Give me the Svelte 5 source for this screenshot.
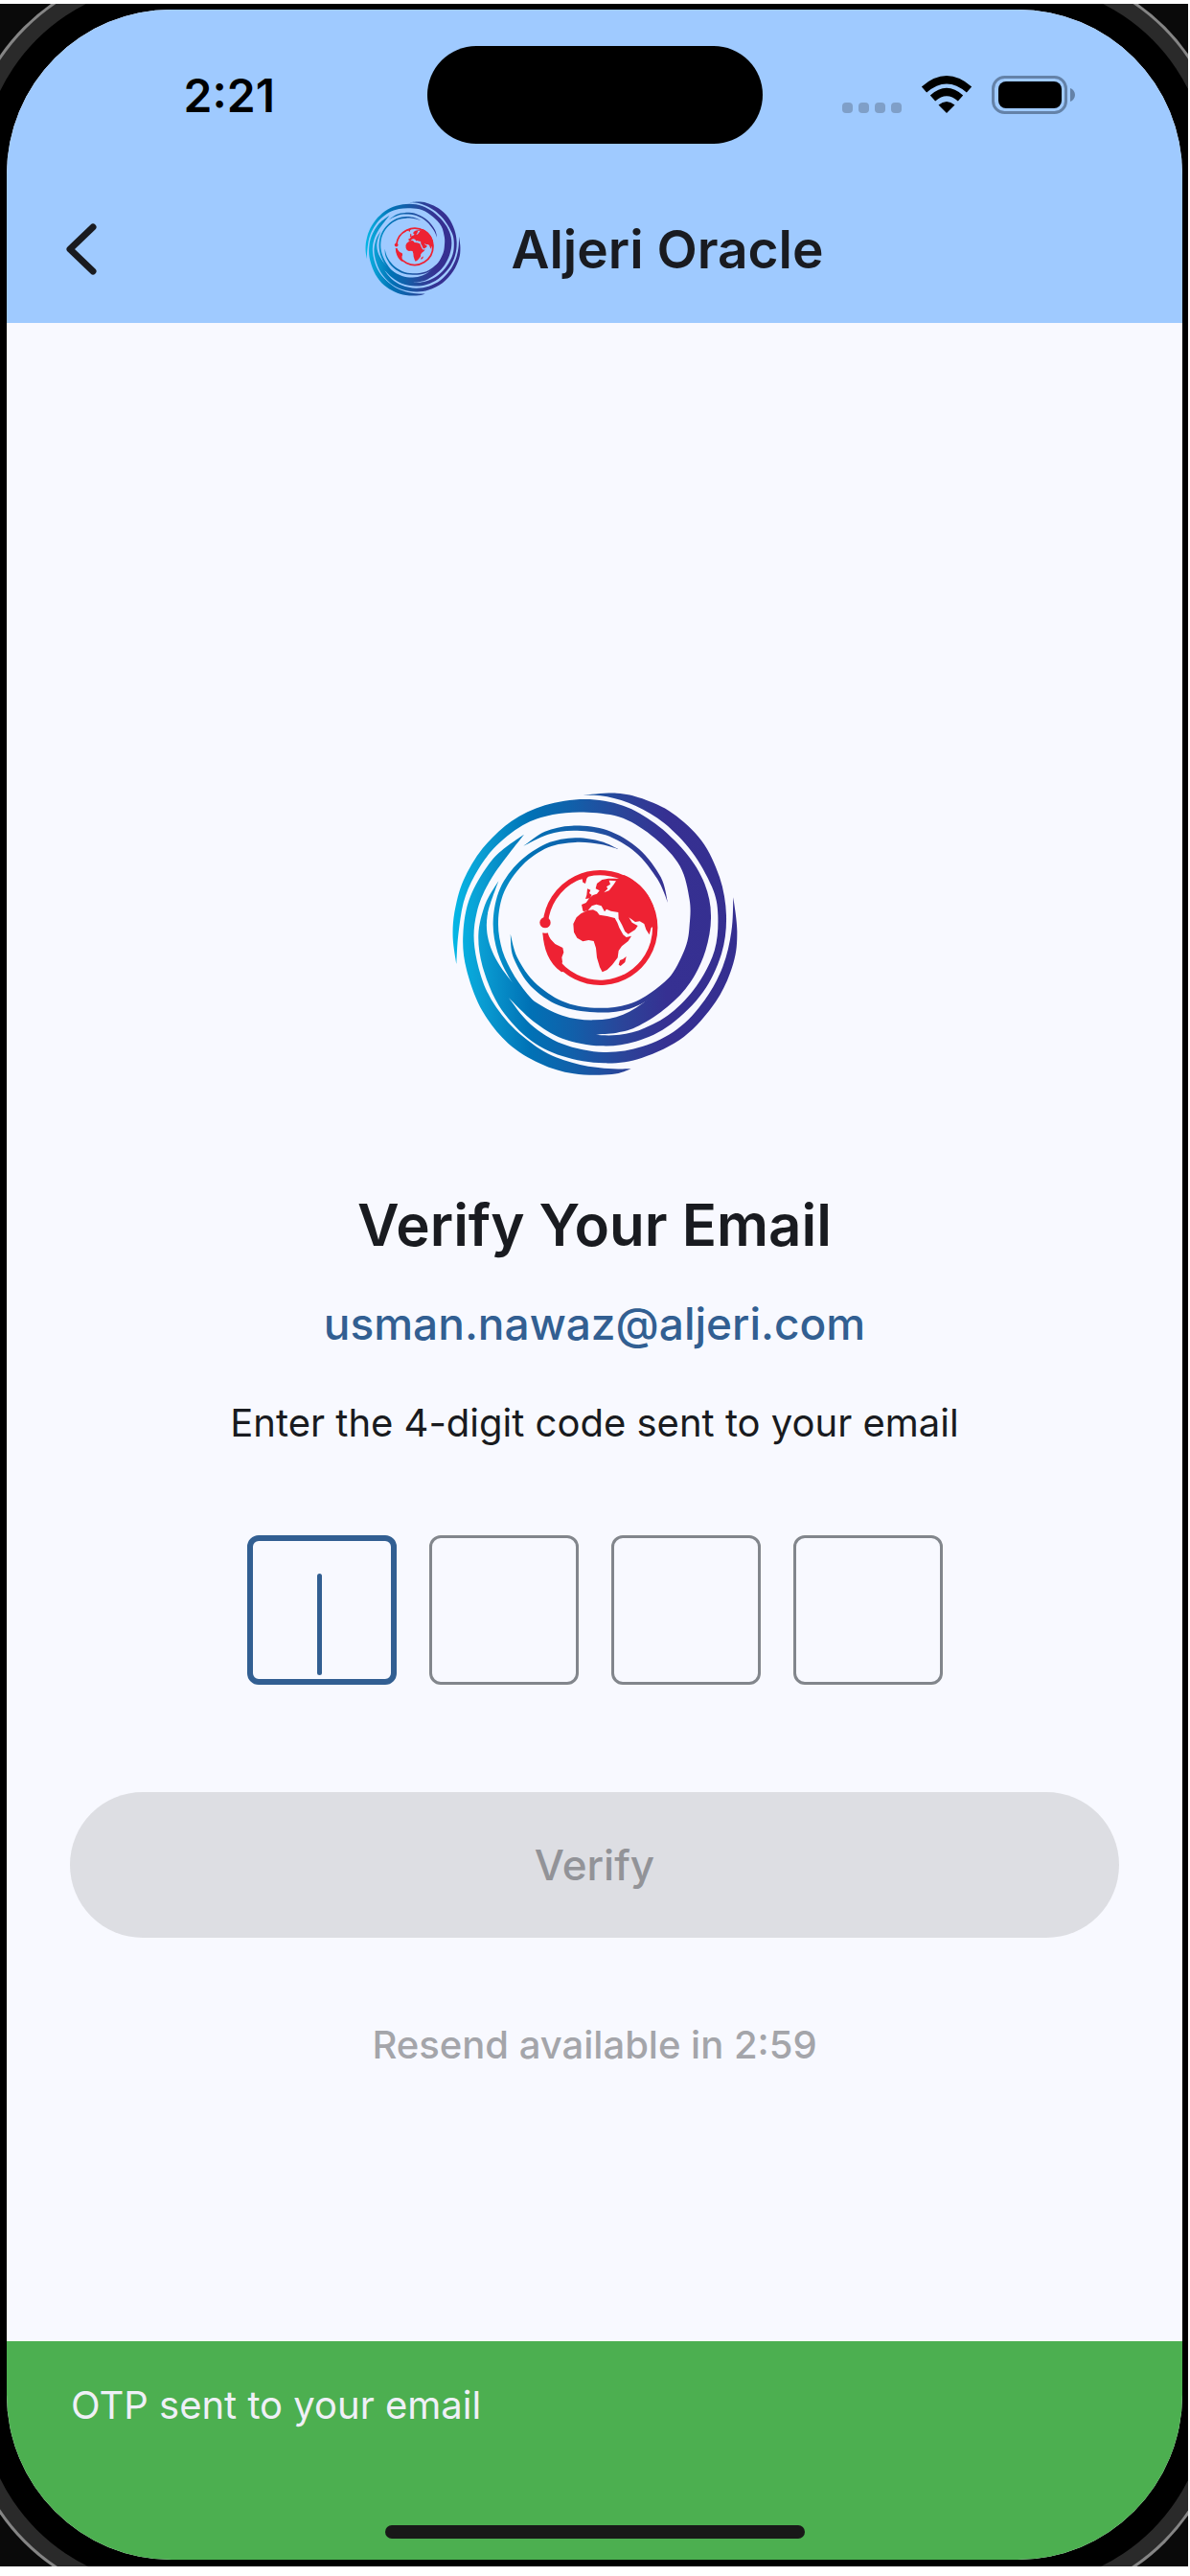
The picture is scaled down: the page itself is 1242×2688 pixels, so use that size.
<script lang="ts">
	type Point = [number, number];

	const email = 'usman.nawaz@aljeri.com';
	const codeLength = 4;

	let digits = $state(Array(codeLength).fill(''));
	let active = $state(0);
	let secondsLeft = $state(179);

	let inputs: HTMLInputElement[] = [];

	const complete = $derived(digits.every((d) => d !== ''));
	const countdown = $derived(
		`${Math.floor(secondsLeft / 60)}:${String(secondsLeft % 60).padStart(2, '0')}`
	);

	function handleInput(e: Event, i: number) {
		const el = e.currentTarget as HTMLInputElement;
		digits[i] = el.value.replace(/\D/g, '').slice(-1);
		el.value = digits[i];
		if (digits[i] && i < codeLength - 1) inputs[i + 1].focus();
	}

	function handleKey(e: KeyboardEvent, i: number) {
		if (e.key === 'Backspace' && !digits[i] && i > 0) inputs[i - 1].focus();
	}

	function resend() {
		digits = Array(codeLength).fill('');
		secondsLeft = 179;
	}

	// Smooth curve through a list of points (Catmull-Rom as cubic beziers)
	function curve(pts: Point[]) {
		let d = '';
		for (let i = 0; i < pts.length - 1; i++) {
			const p0 = pts[i - 1] ?? pts[i];
			const p1 = pts[i];
			const p2 = pts[i + 1];
			const p3 = pts[i + 2] ?? p2;
			const c1 = [p1[0] + (p2[0] - p0[0]) / 6, p1[1] + (p2[1] - p0[1]) / 6];
			const c2 = [p2[0] - (p3[0] - p1[0]) / 6, p2[1] - (p3[1] - p1[1]) / 6];
			d += `C${c1.map(Math.round)} ${c2.map(Math.round)} ${p2} `;
		}
		return d;
	}

	// Closed outline, each entry is one edge between two sharp tips
	function outline(edges: Point[][]) {
		return `M${edges[0][0]} ${edges.map(curve).join('')}Z`;
	}

	const swirl = [
		outline([
			[[200, 322], [158, 395], [137, 490], [150, 590], [200, 710], [290, 812], [400, 870], [530, 892], [650, 875], [780, 810], [880, 700], [935, 580], [947, 480], [935, 373]],
			[[935, 373], [929, 480], [902, 590], [845, 695], [760, 785], [650, 840], [530, 858], [400, 832], [300, 770], [232, 688]],
			[[232, 688], [310, 762], [400, 815], [520, 838], [630, 824], [740, 770], [840, 670], [898, 550], [913, 430], [892, 310], [835, 195], [745, 110], [650, 64], [570, 47], [465, 53]],
			[[465, 53], [540, 58], [630, 87], [720, 142], [805, 230], [868, 340], [887, 430], [876, 540], [820, 650], [740, 735], [650, 785], [570, 804], [505, 804]],
			[[505, 800], [570, 797], [640, 775], [730, 715], [800, 640], [848, 540], [865, 430], [845, 330], [785, 232], [690, 142], [590, 86], [470, 66], [345, 85], [240, 135], [150, 220], [90, 320], [62, 420], [57, 500], [68, 582]],
			[[68, 582], [74, 490], [90, 390], [125, 305], [185, 220], [275, 148], [370, 114], [480, 107], [590, 125], [690, 188], [768, 275], [798, 380], [798, 460], [785, 530], [740, 618], [670, 690], [590, 740], [500, 757], [400, 743], [300, 690], [220, 610], [172, 520], [165, 430], [200, 322]]
		]),
		outline([
			[[280, 176], [185, 250], [112, 370], [89, 490], [100, 600], [150, 730], [230, 830], [330, 893], [435, 925], [555, 927], [615, 910]],
			[[615, 910], [530, 908], [430, 890], [330, 848], [230, 765], [160, 660], [125, 530], [132, 420], [180, 310], [280, 176]]
		]),
		outline([
			[[575, 222], [520, 198], [440, 187], [350, 205], [265, 262], [205, 345], [183, 450], [197, 545], [240, 635], [300, 705], [370, 745]],
			[[370, 745], [305, 692], [250, 620], [212, 540], [199, 450], [218, 355], [275, 272], [355, 217], [440, 201], [520, 207], [575, 222]]
		]),
		outline([
			[[237, 488], [246, 560], [300, 650], [390, 712], [500, 733], [610, 722], [700, 672], [765, 605], [800, 520]],
			[[800, 520], [755, 600], [690, 662], [605, 708], [500, 719], [400, 698], [312, 638], [258, 560], [237, 488]]
		]),
		outline([
			[[278, 212], [345, 167], [430, 149], [540, 163], [640, 222], [708, 310], [730, 390]],
			[[730, 390], [697, 315], [630, 233], [535, 178], [435, 164], [355, 176], [278, 212]]
		])
	];
</script>

{#snippet logo(id: string)}
	<svg class="logo" viewBox="52 42 900 888" aria-hidden="true">
		<defs>
			<linearGradient {id} gradientUnits="userSpaceOnUse" x1="55" y1="0" x2="948" y2="0">
				<stop offset="0" stop-color="#04b8e6" />
				<stop offset="0.1" stop-color="#0a9ed3" />
				<stop offset="0.27" stop-color="#0072b6" />
				<stop offset="0.42" stop-color="#1160aa" />
				<stop offset="0.6" stop-color="#2b4499" />
				<stop offset="0.75" stop-color="#363092" />
				<stop offset="1" stop-color="#352f90" />
			</linearGradient>
		</defs>
		{#each swirl as d}
			<path {d} fill="url(#{id})" />
		{/each}
		<g fill="#ee2233" fill-rule="evenodd">
			<path d="M347 451A172 172 0 1 1 347 485" fill="none" stroke="#ee2233" stroke-width="16" />
			<circle cx="346" cy="452" r="17" />
			<!-- south america -->
			<path d="M338 484l16 4 9 16 14 15 24 12 3 14-6 16 2 14-4 12 13 18-12 2C356 578 342 535 338 484z" />
			<!-- africa and madagascar -->
			<path d="M458 424L478 414 496 412 508 418 516 428 540 432 564 438 572 452 578 468 590 490 600 498 616 494 606 510 586 526 576 540 573 562 556 584 540 600 525 607 517 592 508 562 505 532 498 510 482 507 464 511 446 500 436 482 434 456 444 436z" />
			<path d="M600 558l-4 18-14 12-6-4 4-14 10-4z" />
			<!-- europe and asia -->
			<path d="M464 415L460 396 474 390 484 376 496 366 508 362 516 352 504 346 508 330 524 318 544 314 580 314 570 304 594 304C640 324 682 366 692 430L690 462 678 468 672 490 662 474 656 456 642 448 628 450 608 436 618 452 636 462 628 474 606 488 596 480 586 458 576 440 575 420 552 416 538 410 532 418 522 400 506 395 492 400 480 414 466 418zM546 320L550 332 538 340 542 346 530 358 546 352 560 334 568 322z" />
			<path d="M478 346l10 4-4 10 8 6-6 10-14 2 4-12z" />
			<!-- arctic coast -->
			<path d="M392 350l28-28 44-18 22-2-10 12-4 16-8-4-2-10-20 4-24 16z" />
		</g>
	</svg>
{/snippet}

<div class="device">
	<div class="screen">
		<header>
			<div class="status">
				<span class="time">2:21</span>
				<span class="island"></span>
				<div class="indicators">
					<svg class="cellular" viewBox="0 0 62 40" aria-hidden="true">
						{#each [0, 17, 34, 51] as x}
							<rect {x} y="28" width="11" height="11" rx="4" />
						{/each}
					</svg>
					<svg class="wifi" viewBox="0 0 54 40" aria-hidden="true">
						<path d="M27 39L18.500 30.500Q27 23.500 35.500 30.500Z" />
						<path d="M12.500 23.500Q27 10.500 41.500 23.500" />
						<path d="M3.500 14.500Q27-6 50.500 14.500" />
					</svg>
					<svg class="battery" viewBox="0 0 88 40" aria-hidden="true">
						<rect class="shell" x="1.500" y="1.500" width="76" height="37" rx="12" />
						<rect x="7" y="6" width="66" height="28" rx="8" />
						<path class="nub" d="M82 13c3 1 5 4 5 7s-2 6-5 7z" />
					</svg>
				</div>
			</div>
			<nav>
				<button type="button" class="back" aria-label="Back">
					<svg viewBox="0 0 32 54" aria-hidden="true">
						<path d="M28 4L4 27L28 50" />
					</svg>
				</button>
				<div class="brand">
					{@render logo('swirl-small')}
					<span>Aljeri Oracle</span>
				</div>
			</nav>
		</header>

		<main>
			<div class="hero">{@render logo('swirl-large')}</div>
			<h1>Verify Your Email</h1>
			<p class="email">{email}</p>
			<p class="hint">Enter the {codeLength}-digit code sent to your email</p>

			<form onsubmit={(e) => e.preventDefault()}>
				<div class="code">
					{#each digits as digit, i}
						<div class="cell" class:cell-active={active === i}>
							<input
								type="text"
								inputmode="numeric"
								autocomplete="one-time-code"
								aria-label={`Digit ${i + 1}`}
								value={digit}
								bind:this={inputs[i]}
								onfocus={() => (active = i)}
								oninput={(e) => handleInput(e, i)}
								onkeydown={(e) => handleKey(e, i)}
							/>
							{#if active === i && !digit}
								<span class="caret"></span>
							{/if}
						</div>
					{/each}
				</div>
				<button type="submit" class="verify" disabled={!complete}>Verify</button>
			</form>

			<button type="button" class="resend" disabled={secondsLeft > 0} onclick={resend}>
				{secondsLeft > 0 ? `Resend available in ${countdown}` : 'Resend code'}
			</button>
		</main>

		<div class="snackbar" role="status">OTP sent to your email</div>
		<span class="home"></span>
	</div>
</div>

<style>
	:global(body) {
		background: #fff;
	}

	.device {
		box-sizing: border-box;
		display: flex;
		min-height: 100vh;
		border: solid #fff;
		border-width: 4px 2px 10px 0;
		padding: 6px 6px 7px 7px;
		background: #0a0a0a;
		overflow: hidden;
		font-family: Inter, 'Liberation Sans', sans-serif;
		color: #191b20;
	}

	/* the shadows are the bezel, the metal frame and its bright edge */
	.screen {
		position: relative;
		flex: 1;
		display: flex;
		flex-direction: column;
		border-radius: 172px;
		background: #f8f9ff;
		box-shadow: 0 0 0 27px #000, 0 0 0 43px #2a2a2a, 0 0 0 46px #858585;
		overflow: hidden;
	}

	header {
		background: #9fcaff;
		padding-bottom: 6px;
	}

	.status {
		display: grid;
		grid-template-columns: 1fr 350px 1fr;
		align-items: center;
		height: 178px;
	}

	.time {
		padding-left: 26px;
		text-align: center;
		font-size: 48px;
		font-weight: 600;
		color: #000;
	}

	.island {
		height: 102px;
		border-radius: 51px;
		background: #000;
	}

	.indicators {
		display: flex;
		align-items: center;
		justify-content: center;
		gap: 20px;
		padding-right: 28px;
	}

	.indicators svg {
		height: 40px;
	}

	.cellular {
		fill: #7f9fc8;
	}

	.wifi path + path {
		fill: none;
		stroke: #000;
		stroke-width: 8;
	}

	.battery .shell {
		fill: none;
		stroke: #6482a8;
		stroke-width: 3;
	}

	.battery .nub {
		fill: #6482a8;
	}

	nav {
		display: grid;
		grid-template-columns: 1fr auto 1fr;
		align-items: center;
		height: 143px;
	}

	button {
		border: 0;
		background: none;
		font: inherit;
	}

	.back {
		justify-self: start;
		display: flex;
		margin-left: 36px;
		padding: 26px;
	}

	.back svg {
		width: 32px;
		height: 54px;
		fill: none;
		stroke: #191b20;
		stroke-width: 7;
		stroke-linecap: round;
		stroke-linejoin: round;
	}

	.brand {
		display: flex;
		align-items: center;
		gap: 52px;
		font-size: 55px;
		font-weight: 600;
	}

	.logo {
		display: block;
		width: 100%;
	}

	.brand .logo {
		width: 100px;
	}

	main {
		flex: 1;
		display: flex;
		flex-direction: column;
		align-items: center;
		justify-content: center;
		padding: 0 66px;
	}

	.hero {
		width: 300px;
	}

	h1 {
		margin: 116px 0 0;
		font-size: 60px;
		font-weight: 600;
		line-height: 80px;
	}

	p {
		margin: 0;
	}

	.email {
		margin-top: 33px;
		font-size: 46px;
		font-weight: 500;
		line-height: 60px;
		color: #325f92;
	}

	.hint {
		margin-top: 49px;
		font-size: 40px;
		line-height: 50px;
	}

	form {
		display: flex;
		flex-direction: column;
		gap: 112px;
		width: 100%;
		margin-top: 92px;
	}

	.code {
		display: flex;
		justify-content: center;
		gap: 34px;
	}

	.cell {
		position: relative;
		width: 156px;
		height: 156px;
	}

	.cell input {
		box-sizing: border-box;
		width: 100%;
		height: 100%;
		border: 3px solid #82868c;
		border-radius: 12px;
		outline: none;
		background: none;
		text-align: center;
		font: 600 60px Inter, sans-serif;
		color: inherit;
		caret-color: transparent;
	}

	.cell-active input {
		border: 6px solid #325f92;
	}

	.caret {
		position: absolute;
		left: 73px;
		bottom: 10px;
		width: 5px;
		height: 106px;
		border-radius: 3px;
		background: #325f92;
	}

	.verify {
		height: 152px;
		border-radius: 76px;
		background: #325f92;
		font-size: 44px;
		font-weight: 500;
		color: #fff;
	}

	.verify:disabled {
		background: #dddee3;
		color: #929398;
	}

	.resend {
		height: 98px;
		margin-top: 63px;
		font-size: 40px;
		font-weight: 500;
		color: #325f92;
	}

	.resend:disabled {
		color: #a4a5aa;
	}

	.snackbar {
		position: absolute;
		inset: auto 0 0;
		box-sizing: border-box;
		min-height: 228px;
		padding: 42px 67px;
		background: #4caf50;
		font-size: 40px;
		line-height: 50px;
		color: #eff0f7;
	}

	.home {
		position: absolute;
		bottom: 22px;
		left: 50%;
		width: 438px;
		height: 14px;
		border-radius: 7px;
		background: #181818;
		transform: translateX(-50%);
	}
</style>
